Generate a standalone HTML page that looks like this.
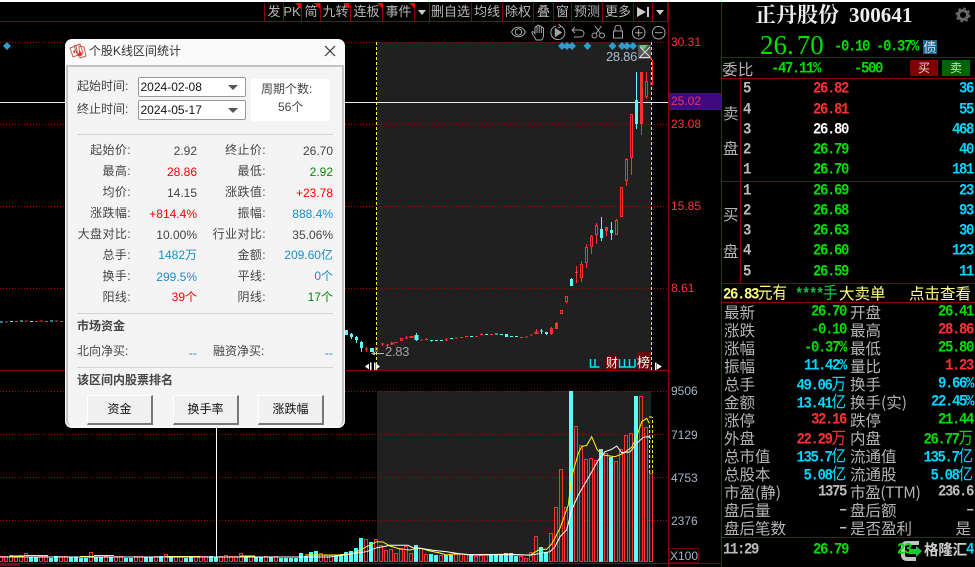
<!DOCTYPE html>
<html><head><meta charset="utf-8"><style>
html,body{margin:0;padding:0;background:#000}
#p{position:relative;width:975px;height:567px;overflow:hidden;background:#000;font-family:"Liberation Sans","Noto Sans CJK SC",sans-serif}
#p div,#p span.a{position:absolute;white-space:nowrap}
svg{position:absolute;left:0;top:0}
.l{height:1px;background:#8b0000}
.tb{top:3px;height:18px;line-height:18px;text-align:center;font:13px/18px "Liberation Sans","Noto Sans CJK SC",sans-serif;color:#b8b8b8;border-right:1px solid #8b0000}
.ax{font-size:12px;line-height:14px;color:#ff3232;left:671px}
.vx{font-size:12px;line-height:14px;color:#a6b4c4;left:671px}
.d{font:12px/16px "Liberation Sans","Noto Sans CJK SC",sans-serif;color:#444}
.dl{text-align:right;width:70px;letter-spacing:.4px}
.dv{text-align:right;width:66px;color:#444}
.r{color:#f00!important}.g{color:#008c00!important}.b{color:#1b8fc4!important}
.cb{left:137.5px;width:106px;height:18px;background:#fff;border:1px solid #999;border-radius:2px;font:12px/19px "Liberation Sans",sans-serif;color:#111;text-indent:2px}
.cb i{position:absolute;right:7px;top:7px;width:0;height:0;border:5px solid transparent;border-top:5px solid #555;border-bottom:0}
.btn{top:395px;width:63px;height:27px;background:#f0f0f0;border-top:1px solid #fff;border-left:1px solid #fff;border-right:2px solid #777;border-bottom:2px solid #777;text-align:center;font:12px/27px "Liberation Sans","Noto Sans CJK SC",sans-serif;color:#111}
.n{font:bold 14px/18px "Liberation Mono",monospace;letter-spacing:-1.4px;transform:scaleY(1.15)}
.c{font:15.5px/18px "Noto Sans CJK SC",sans-serif;color:#b4b4b4}
.w{color:#fff}.R{color:#ff3232}.G{color:#00e000}.C{color:#00d8ff}.S{color:#bdbdbd}.Y{color:#ffff80}
.u{font:14.500px/18px "Noto Sans CJK SC",sans-serif;letter-spacing:0}
</style></head><body><div id="p">
<div style="left:0;top:0;width:975px;height:2px;background:#fff"></div>

<div style="left:377px;top:42px;width:274px;height:328px;background:#202020"></div>
<div style="left:377px;top:391px;width:274px;height:171px;background:#202020"></div>

<svg width="975" height="567" viewBox="0 0 975 567" fill="none">
<g stroke="#a80000" stroke-width="1" stroke-dasharray="1 2">
<path d="M0 42.5H668M0 124.5H668M0 206.5H668M0 288.5H668M0 391.5H668M0 434.5H668M0 477.5H668M0 520.5H668"/>
</g>
<path stroke="#ffff33" stroke-dasharray="3 2" d="M376.5 42V370M651.5 42V370"/>
<path stroke="#fff" d="M216.5 100V562"/>
<path stroke="#e8e8e8" d="M0 102.5H668"/>

<!-- left tail -->
<path stroke="#55ffff" d="M0 322h3M10 321.5h3M20 321h3M30 321.5h3M50 321h3"/>
<path stroke="#ff3232" d="M5 322h3M15 321.5h3M25 321h3M35 321.5h3M40 321h3M45 321.5h3M55 321h3M60 321.5h3"/>

<!-- red candles -->
<path stroke="#ff3232" d="M652.5 60V82M651 82.5h2v2h-2zM646.5 72V81M646.5 96V99M645.5 81.5h2v15h-2zM641.5 72V135M640.5 72.5h2v51h-2zM631.5 157V175M630.5 114.5h2v43h-2zM626.5 158V159M626.5 181V186M625.5 159.5h2v21h-2zM620.5 187.5h2v29h-2zM616.5 219V220M616.5 234V235M615.5 220.5h2v14h-2zM606.5 227V236M605.5 227.5h2v3h-2zM596.5 223V225M596.5 234V244M595.5 225.5h2v9h-2zM591.5 235V236M591.5 246V254M590.5 236.5h2v10h-2zM586.5 244V247M586.5 262V268M585.5 247.5h2v15h-2zM581.5 261V264M581.5 277V282M580.5 264.5h2v13h-2zM576.5 266V283M575 272.5h3M565.5 296.5h2v5h-2zM566.5 301V303M560.5 310.5h2v3h-2zM556.5 322V329M555.5 323.5h2v5h-2zM551.5 327V335M550.5 328.5h2v5h-2z"/>
<path stroke="#ff3232" d="M536.5 329V333M535 332h3v1.5h-3zM530 335h3M525 337h3M520 337.5h3M490 334.5h3M480 334.5h3M481.5 333V335M475 336.5h3M465 336.5h3M460 337.5h3M455 338h3M445 340h3M446.5 338V341M425 339.5h3M426.5 338V340M420 340h3M410 336.5h3v1h-3zM406.5 336V339M405 338h3M400.5 338.5h2v2h-2zM395 342.5h3M391 343h3v1h-3zM391.5 342V345M386 345h3M387.5 344V347M381 344h3M382.5 343V346M375.5 347.5h2v4h-2zM366.5 347V352M365 349h3"/>
<!-- cyan candles -->
<path stroke="#55ffff" d="M636.5 72V100M636.5 124V129M611.5 222V230M611.5 233V240M601.5 217V229M601.5 238V241M571.5 278V280M546.5 334V335M541.5 329V334M540 331h3M515 336.5h3M510 336.5h3M500 334.5h3M495 334h3M485 334.5h3M470 336.5h3M450 338.5h3M440 340.5h3M435 340.5h3M430 340.5h3M431.5 340V341.5M416.5 333V341M356.5 336V343M351.5 333V339M346.5 330V335M361.5 341V352"/>
<path fill="#55ffff" d="M635 100h3v24h-3zM610 230h3v3h-3zM600 229h3v9h-3zM570 279h3v7h-3zM545 332h3v2h-3zM505 334h3v3h-3zM414.5 335h4v5h-4zM370 348h4v4h-4zM360 342h3v6h-3zM355 337h3v3h-3zM350 334h3v3h-3zM345 330h3v5h-3z"/>

<!-- volume cyan -->
<path fill="#55ffff" d="M29 557h4v5h-4zM34 557h4v5h-4zM49 558h4v4h-4zM54 556h4v6h-4zM69 557h4v5h-4zM74 557h4v5h-4zM79 558h4v4h-4zM84 558h4v4h-4zM94 557h4v5h-4zM99 557h4v5h-4zM109 557h4v5h-4zM124 558h4v4h-4zM129 558h4v4h-4zM144 557h4v5h-4zM149 557h4v5h-4zM159 556h4v6h-4zM169 557h4v5h-4zM184 558h4v4h-4zM189 557h4v5h-4zM209 556h4v6h-4zM214 557h4v5h-4zM244 557h4v5h-4zM254 557h4v5h-4zM259 557h4v5h-4zM269 557h4v5h-4zM279 558h4v4h-4zM284 558h4v4h-4zM289 558h4v4h-4zM294 558h4v4h-4zM299 553h4v9h-4zM304 556h4v6h-4zM309 552h4v10h-4zM314 551h4v11h-4zM334 555h4v7h-4zM339 555h4v7h-4zM344 552h4v10h-4zM349 551h4v11h-4zM354 548h4v14h-4zM359 538h4v24h-4zM369 542h4v20h-4zM414 545h4v17h-4zM429 554h4v8h-4zM434 555h4v7h-4zM444 555h4v7h-4zM449 555h4v7h-4zM469 554h4v8h-4zM489 555h4v7h-4zM494 555h4v7h-4zM499 554h4v8h-4zM504 553h4v9h-4zM509 553h4v9h-4zM514 556h4v6h-4zM539 547h4v15h-4zM544 552h4v10h-4zM569 391h4v171h-4zM599 449h4v113h-4zM609 457h4v105h-4zM634 396h4v166h-4z"/>
<!-- volume red -->
<path stroke="#ff3232" d="M-.5 556.5h3V561.5h-3zM4.5 556.5h3V561.5h-3zM9.5 555.5h3V561.5h-3zM14.5 556.5h3V561.5h-3zM19.5 555.5h3V561.5h-3zM24.5 553.5h3V561.5h-3zM39.5 556.5h3V561.5h-3zM44.5 556.5h3V561.5h-3zM59.5 556.5h3V561.5h-3zM64.5 556.5h3V561.5h-3zM89.5 552.5h3V561.5h-3zM104.5 556.5h3V561.5h-3zM114.5 556.5h3V561.5h-3zM119.5 556.5h3V561.5h-3zM134.5 556.5h3V561.5h-3zM139.5 556.5h3V561.5h-3zM154.5 556.5h3V561.5h-3zM164.5 554.5h3V561.5h-3zM174.5 556.5h3V561.5h-3zM179.5 556.5h3V561.5h-3zM194.5 556.5h3V561.5h-3zM199.5 556.5h3V561.5h-3zM204.5 556.5h3V561.5h-3zM219.5 556.5h3V561.5h-3zM224.5 555.5h3V561.5h-3zM229.5 556.5h3V561.5h-3zM234.5 556.5h3V561.5h-3zM239.5 553.5h3V561.5h-3zM249.5 556.5h3V561.5h-3zM264.5 556.5h3V561.5h-3zM274.5 556.5h3V561.5h-3zM319.5 553.5h3V561.5h-3zM324.5 555.5h3V561.5h-3zM329.5 555.5h3V561.5h-3zM364.5 539.5h3V561.5h-3zM374.5 539.5h3V561.5h-3zM379.5 545.5h3V561.5h-3zM384.5 550.5h3V561.5h-3zM389.5 549.5h3V561.5h-3zM394.5 553.5h3V561.5h-3zM399.5 548.5h3V561.5h-3zM404.5 546.5h3V561.5h-3zM409.5 553.5h3V561.5h-3zM419.5 548.5h3V561.5h-3zM424.5 554.5h3V561.5h-3zM439.5 555.5h3V561.5h-3zM454.5 554.5h3V561.5h-3zM459.5 554.5h3V561.5h-3zM464.5 554.5h3V561.5h-3zM474.5 556.5h3V561.5h-3zM479.5 555.5h3V561.5h-3zM484.5 554.5h3V561.5h-3zM519.5 556.5h3V561.5h-3zM524.5 558.5h3V561.5h-3zM529.5 552.5h3V561.5h-3zM534.5 536.5h3V561.5h-3zM549.5 533.5h3V561.5h-3zM554.5 507.5h3V561.5h-3zM559.5 469.5h3V561.5h-3zM564.5 507.5h3V561.5h-3zM574.5 426.5h3V561.5h-3zM579.5 445.5h3V561.5h-3zM584.5 459.5h3V561.5h-3zM589.5 458.5h3V561.5h-3zM594.5 460.5h3V561.5h-3zM604.5 453.5h3V561.5h-3zM614.5 461.5h3V561.5h-3zM619.5 449.5h3V561.5h-3zM624.5 435.5h3V561.5h-3zM629.5 433.5h3V561.5h-3zM639.5 396.5h3V561.5h-3zM644.5 427.5h3V561.5h-3zM649.5 473.5h3V561.5h-3z"/>
<!-- MA lines -->
<path stroke="#ffff00" d="M10 556H24M24 555.5H48M80 556.5H94M94 555.5H114M165 556.5H200M240 556H255M305 555H340M340 554.5H350L355 552.7 366.7 546.7 376.7 541.7 383 542 390 546 400 549 410 550 420 548 430 551 440 553 446.7 555 453 554 463 554 473 555 510 554.7 530 555 540 549.3 546.7 549.3 551.7 544 560 528.3 568.3 505 571.7 476.7 578.3 453.3 581.7 446.7 586.7 445.3 591.7 436.7 597.3 450 603.3 455 615 456.7 623.3 453.3 631.7 447.3 636.7 436.7 641.7 421.7 646.7 418.3 649.3 423.3"/>
<path stroke="#fff" d="M0 557H330L350 554 366.7 551.7 376.7 547.7 383 546.7 390 545.3 408 545.3 413 547.7 423 548.7 433 550.3 446.7 551.7 453 552.7 467 554.7 510 554.3 530 555.3 550 551.7 555 546.7 560 536.7 566.7 530 571.7 510 578.3 495 590 475 598.3 460 605 451.7 611.7 449.3 616.7 446 621.7 452.7 630 452 636.7 443.3 643.3 437.3 648.3 436.7 651 438.5"/>
<path stroke="#ffff00" stroke-dasharray="3 2" d="M649.5 473V423M652.5 473V417M649 417h4"/>

<!-- diamonds -->
<path fill="#2f9bcf" d="M7 42l4 4-4 4-4-4zM562 42l4 4-4 4-4-4zM567 42l4 4-4 4-4-4zM572 42l4 4-4 4-4-4zM587.5 42l4 4-4 4-4-4zM612.5 42l4 4-4 4-4-4zM622 42l4 4-4 4-4-4zM627 42l4 4-4 4-4-4zM633 42l4 4-4 4-4-4z"/>
<path fill="#555" d="M638 45h13v14h-13z"/>
<path fill="#55cc77" d="M639 45h9l-4.500 5z"/>
<path stroke="#ddd" d="M640 47l10 10M650 47l-10 10M639 57.500h11"/>
<path fill="#ff3232" d="M650 57h2v2h-2z"/>

<!-- icons -->
<g stroke="#a4a4a4" stroke-width="1">
<path d="M511.500 32c3-6.500 10.500-6.500 14 0-3.500 6.500-11 6.500-14 0z"/><circle cx="518.500" cy="32" r="3.200"/>
<path d="M535 38c-1-2-3-4-3-5.500 0-1.500 1.800-1 3 1V28c0-1.800 2-1.800 2 0v-1.500c0-1.800 2.200-1.800 2.200 0v.8c0-1.800 2.200-1.800 2.200 0v1.200c0-1.500 2.100-1.500 2.100.2V35c0 2-1 4-2 5h-5.500c-.5-1-.5-1.500-1-2zM537 28v5M539.200 27v6M541.400 28v5"/>
<path d="M561 26.300a7 7 0 1 1-5-.5M558.500 24l2.500 2.300-3 1.700"/><path fill="#a4a4a4" d="M555.300 28.500l6 4-6 4z"/>
<path d="M575 27l-3 3 3 3M572 30h8c3 0 4 2 4 3.500s-1 3.500-4 3.500h-6"/>
<circle cx="594.500" cy="35.500" r="2.500"/><circle cx="602" cy="35.500" r="2.500"/><path d="M596 33.500L601.500 26M600.500 33.500L595 26"/>
<rect x="613.500" y="31" width="9" height="7"/><path d="M615 31v-3c0-3.500 6-3.500 6 0v3"/>
<circle cx="638.700" cy="32.700" r="6.300"/><path d="M635 32.700h7.500M638.700 29v7.500"/>
<circle cx="658.700" cy="32.700" r="6.300"/><path d="M655 32.700h7.500"/>
</g>
<!-- arrows low-marker -->
<path stroke="#bbb" d="M372 353.500h12"/>
<path fill="#bbb" d="M371 353.500l4-2v4z"/>
<path fill="#fff" d="M365 366.500l4-3v6zM370 362.500h1.500v8H370zM374 362.500h1.500v8H374zM376 363.500l4 3-4 3zM655 362.500h1.500v8H655zM657 363.500l5 3-5 3z"/>
<path stroke="#00e4f4" stroke-width="1.500" d="M590.500 359v8h9M595 359v8M619.500 359v8h15.500M624.500 359v8M629.500 359v8M635 359v8"/>
<!-- structural lines -->
<path stroke="#8b0000" d="M0 21.500H668M0 370.500H668M0 563.500H721M668.500 2V567M721.500 2V567M721 57.500H975M721 78.500H975M740.500 78V283M721 181.500H975M721 283.500H975M721 302.500H975M721 537.500H975"/>
<path stroke="#8b0000" stroke-width="2" d="M0 565H20"/>
</svg>

<div class="a" style="left:606px;top:50px;font-size:13px;line-height:14px;color:#a8bccc;letter-spacing:-.3px">28.86</div>
<div class="a" style="left:385px;top:345px;font-size:13px;line-height:14px;color:#a0a0a0;letter-spacing:-.3px">2.83</div>
<div style="left:606px;top:356px;width:12px;height:13px;background:#7d0000;color:#fff;font:12px/13px 'Noto Sans CJK SC',sans-serif">财</div>
<div style="left:637px;top:352px;width:14px;height:17px;background:#660808;color:#fff;font:13px/19px 'Noto Sans CJK SC',sans-serif">榜</div>

<!-- toolbar -->
<div class="tb" style="left:264px;width:18px;border-left:1px solid #8b0000">发</div>
<div class="tb" style="left:283px;width:18px">PK</div>
<div class="tb" style="left:302px;width:18px">简</div>
<div class="tb" style="left:321px;width:29px">九转</div>
<div class="tb" style="left:351px;width:31px">连板</div>
<div class="tb" style="left:383px;width:31px">事件</div>
<div class="tb" style="left:415px;width:14px"><span style="display:block;width:0;height:0;border:4px solid transparent;border-top:5px solid #ccc;border-bottom:0;margin:7px 0 0 3px"></span></div>
<div class="tb" style="left:430px;width:41px">删自选</div>
<div class="tb" style="left:472px;width:30px">均线</div>
<div class="tb" style="left:503px;width:30px">除权</div>
<div class="tb" style="left:534px;width:19px">叠</div>
<div class="tb" style="left:554px;width:17px">窗</div>
<div class="tb" style="left:572px;width:30px">预测</div>
<div class="tb" style="left:603px;width:30px">更多</div>
<div class="tb" style="left:634px;width:18px"><span style="display:block;width:0;height:0;border:5px solid transparent;border-left:9px solid #ccc;border-right:0;margin:4px 0 0 3px"></span><span style="display:block;position:absolute;left:13px;top:4px;width:2px;height:10px;background:#ccc"></span></div>
<div class="tb" style="left:653px;width:14px"><span style="display:block;width:0;height:0;border:4px solid transparent;border-top:5px solid #ccc;border-bottom:0;margin:7px 0 0 3px"></span></div>
<svg width="975" height="30"><path fill="#f00" d="M295 3h6v6zM314 3h6v6zM343 3h6v6zM377 3h6v6zM409 3h6v6z"/></svg>

<!-- axis -->
<div class="ax" style="top:35px">30.31</div>
<div class="ax" style="top:117px">23.08</div>
<div class="ax" style="top:199px">15.85</div>
<div class="ax" style="top:281px">8.61</div>
<div style="left:669px;top:93px;width:52px;height:17px;background:#3f0a80;border-top:1px solid #8b0000;border-bottom:1px solid #8b0000;box-sizing:border-box;color:#f03060;font-size:12px;line-height:15px;text-indent:2px">25.02</div>
<div class="vx" style="top:384px">9506</div>
<div class="vx" style="top:428px">7129</div>
<div class="vx" style="top:471px">4753</div>
<div class="vx" style="top:514px">2376</div>
<div style="left:669px;top:548px;width:28px;height:13px;border:1px solid #6a0000;color:#a6b4c4;font-size:12px;line-height:14px">X100</div>

<!-- dialog -->
<div style="left:65px;top:39px;width:280px;height:389px;background:#fafafa;border-radius:7px;overflow:hidden">
  <div style="left:1px;top:26px;width:274px;height:359px;background:#f4f4f4;border:2px solid #c4c4c4;border-bottom:0;border-radius:0 0 6px 6px"></div>
</div>
<svg width="975" height="567" fill="none"><g transform="translate(69,43)"><path fill="#fff" stroke="#c85a50" d="M1 5l6-2 2 9-5 2zM5 3l6-2 3 9-5 3zM10 3l5 1 2 9-6 2z"/><path fill="#d9352b" d="M11 8l2.500 3-1.500 2h-2.500l-.5-2zM5 7l1.500 1.500-1 2-1.500-1.500z"/></g>
<path stroke="#333" stroke-width="1.200" d="M325 46l10 10M335 46l-10 10"/></svg>
<div class="d" style="left:89px;top:43px;color:#333">个股K线区间统计</div>

<div class="d" style="left:77px;top:78px">起始时间:</div>
<div class="d" style="left:77px;top:101px">终止时间:</div>
<div class="cb" style="top:77px">2024-02-08<i></i></div>
<div class="cb" style="top:100px">2024-05-17<i></i></div>
<div style="left:251px;top:79px;width:79px;height:42px;background:#fff;border-radius:2px"></div>
<div class="d" style="left:261px;top:81px">周期个数:</div>
<div class="d" style="left:278px;top:99px">56个</div>
<div style="left:77px;top:134px;width:256px;height:1px;background:#d4d4d4"></div>

<div class="d dl" style="left:61px;top:142px">起始价:</div><div class="d dv" style="left:131px;top:143px">2.92</div>
<div class="d dl" style="left:196px;top:142px">终止价:</div><div class="d dv" style="left:267px;top:143px">26.70</div>
<div class="d dl" style="left:61px;top:163px">最高:</div><div class="d dv r" style="left:131px;top:164px">28.86</div>
<div class="d dl" style="left:196px;top:163px">最低:</div><div class="d dv g" style="left:267px;top:164px">2.92</div>
<div class="d dl" style="left:61px;top:184px">均价:</div><div class="d dv" style="left:131px;top:185px">14.15</div>
<div class="d dl" style="left:196px;top:184px">涨跌值:</div><div class="d dv r" style="left:267px;top:185px">+23.78</div>
<div class="d dl" style="left:61px;top:205px">涨跌幅:</div><div class="d dv r" style="left:131px;top:206px">+814.4%</div>
<div class="d dl" style="left:196px;top:205px">振幅:</div><div class="d dv b" style="left:267px;top:206px">888.4%</div>
<div class="d dl" style="left:61px;top:226px">大盘对比:</div><div class="d dv" style="left:131px;top:227px">10.00%</div>
<div class="d dl" style="left:196px;top:226px">行业对比:</div><div class="d dv" style="left:267px;top:227px">35.06%</div>
<div class="d dl" style="left:61px;top:247px">总手:</div><div class="d dv b" style="left:131px;top:247px">1482万</div>
<div class="d dl" style="left:196px;top:247px">金额:</div><div class="d dv b" style="left:267px;top:247px">209.60亿</div>
<div class="d dl" style="left:61px;top:268px">换手:</div><div class="d dv b" style="left:131px;top:269px">299.5%</div>
<div class="d dl" style="left:196px;top:268px">平线:</div><div class="d dv b" style="left:267px;top:268px">0个</div>
<div class="d dl" style="left:61px;top:289px">阳线:</div><div class="d dv r" style="left:131px;top:289px">39个</div>
<div class="d dl" style="left:196px;top:289px">阴线:</div><div class="d dv g" style="left:267px;top:289px">17个</div>
<div style="left:77px;top:313px;width:256px;height:1px;background:#d4d4d4"></div>
<div class="d" style="left:77px;top:318px;font-weight:bold">市场资金</div>
<div class="d" style="left:77px;top:343px">北向净买:</div>
<div class="d" style="left:213px;top:343px">融资净买:</div>
<div class="d dv b" style="left:131px;top:345px">--</div>
<div class="d dv b" style="left:267px;top:345px">--</div>
<div style="left:77px;top:367px;width:256px;height:1px;background:#d4d4d4"></div>
<div class="d" style="left:77px;top:372px;font-weight:bold">该区间内股票排名</div>
<div class="btn" style="left:87px">资金</div>
<div class="btn" style="left:173px">换手率</div>
<div class="btn" style="left:258px">涨跌幅</div>

<!-- right panel -->
<div style="left:755px;top:2px;color:#eee;font:bold 21px/26px 'Liberation Serif','Noto Serif CJK SC',serif">正丹股份</div>
<div style="left:849px;top:2px;color:#eee;font:bold 21px/26px 'Liberation Serif',serif;letter-spacing:.1px">300641</div>
<svg width="975" height="60" fill="none"><circle cx="963" cy="15" r="4.500" stroke="#666" stroke-width="3"/><circle cx="963" cy="15" r="6.500" stroke="#666" stroke-width="2" stroke-dasharray="2.500 2.600"/></svg>
<div style="left:760px;top:30px;color:#00e000;font:27px/30px 'Liberation Serif',serif;letter-spacing:0">26.<span style="margin-left:3px">70</span></div>
<div class="n G" style="left:834px;top:38px">-0.10</div>
<div class="n G" style="left:876px;top:38px">-0.37%</div>
<div style="left:923px;top:40px;width:14px;height:14px;background:#1c6496;color:#ddd;font:13px/14px 'Noto Sans CJK SC',sans-serif;text-align:center">债</div>

<div class="c" style="left:722px;top:60px;letter-spacing:.4px">委比</div>
<div class="n G" style="left:771px;top:60px">-47.11%</div>
<div class="n G" style="left:854px;top:60px">-500</div>
<div style="left:910px;top:60px;width:28px;height:16px;background:#800000;color:#ddd;font:12px/16px 'Noto Sans CJK SC',sans-serif;text-align:center">买</div>
<div style="left:942px;top:60px;width:28px;height:16px;background:#006400;color:#ddd;font:12px/16px 'Noto Sans CJK SC',sans-serif;text-align:center">卖</div>

<div class="c" style="left:723px;top:104px">卖</div><div class="c" style="left:723px;top:139px">盘</div>
<div class="c" style="left:723px;top:205px">买</div><div class="c" style="left:723px;top:242px">盘</div>

<div class="n S" style="left:743px;top:80px">5</div><div class="n R" style="left:813px;top:80px">26.82</div><div class="n C" style="right:2px;top:80px">36</div>
<div class="n S" style="left:743px;top:101px">4</div><div class="n R" style="left:813px;top:101px">26.81</div><div class="n C" style="right:2px;top:101px">55</div>
<div class="n S" style="left:743px;top:121px">3</div><div class="n w" style="left:813px;top:121px">26.80</div><div class="n C" style="right:2px;top:121px">468</div>
<div class="n S" style="left:743px;top:141px">2</div><div class="n G" style="left:813px;top:141px">26.79</div><div class="n C" style="right:2px;top:141px">40</div>
<div class="n S" style="left:743px;top:161px">1</div><div class="n G" style="left:813px;top:161px">26.70</div><div class="n C" style="right:2px;top:161px">181</div>
<div class="n S" style="left:743px;top:182px">1</div><div class="n G" style="left:813px;top:182px">26.69</div><div class="n C" style="right:2px;top:182px">23</div>
<div class="n S" style="left:743px;top:202px">2</div><div class="n G" style="left:813px;top:202px">26.68</div><div class="n C" style="right:2px;top:202px">93</div>
<div class="n S" style="left:743px;top:222px">3</div><div class="n G" style="left:813px;top:222px">26.63</div><div class="n C" style="right:2px;top:222px">30</div>
<div class="n S" style="left:743px;top:242px">4</div><div class="n G" style="left:813px;top:242px">26.60</div><div class="n C" style="right:2px;top:242px">123</div>
<div class="n S" style="left:743px;top:263px">5</div><div class="n G" style="left:813px;top:263px">26.59</div><div class="n C" style="right:2px;top:263px">11</div>

<div class="n Y" style="left:723px;top:284px">26.83<span class="u">元有</span></div>
<div class="n" style="left:795px;top:284px;color:#00c850">****<span class="u">手</span></div>
<div class="c" style="left:839px;top:284px;color:#ffff80">大卖单</div>
<div class="c" style="left:909px;top:284px;color:#ffff80">点击查看</div>

<div class="c" style="left:724px;top:303px">最新</div><div class="n G" style="right:129px;top:303px">26.70</div><div class="c" style="left:850px;top:303px">开盘</div><div class="n G" style="right:2px;top:303px">26.41</div>
<div class="c" style="left:724px;top:321px">涨跌</div><div class="n G" style="right:129px;top:321px">-0.10</div><div class="c" style="left:850px;top:321px">最高</div><div class="n R" style="right:2px;top:321px">28.86</div>
<div class="c" style="left:724px;top:339px">涨幅</div><div class="n G" style="right:129px;top:339px">-0.37%</div><div class="c" style="left:850px;top:339px">最低</div><div class="n G" style="right:2px;top:339px">25.80</div>
<div class="c" style="left:724px;top:357px">振幅</div><div class="n C" style="right:129px;top:357px">11.42%</div><div class="c" style="left:850px;top:357px">量比</div><div class="n R" style="right:2px;top:357px">1.23</div>
<div class="c" style="left:724px;top:375px">总手</div><div class="n C" style="right:129px;top:375px">49.06<span class="u">万</span></div><div class="c" style="left:850px;top:375px">换手</div><div class="n C" style="right:2px;top:375px">9.66%</div>
<div class="c" style="left:724px;top:393px">金额</div><div class="n C" style="right:129px;top:393px">13.41<span class="u">亿</span></div><div class="c" style="left:850px;top:393px">换手(实)</div><div class="n C" style="right:2px;top:393px">22.45%</div>
<div class="c" style="left:724px;top:411px">涨停</div><div class="n R" style="right:129px;top:411px">32.16</div><div class="c" style="left:850px;top:411px">跌停</div><div class="n G" style="right:2px;top:411px">21.44</div>
<div class="c" style="left:724px;top:429px">外盘</div><div class="n R" style="right:129px;top:429px">22.29<span class="u">万</span></div><div class="c" style="left:850px;top:429px">内盘</div><div class="n G" style="right:2px;top:429px">26.77<span class="u">万</span></div>
<div class="c" style="left:724px;top:447px">总市值</div><div class="n C" style="right:129px;top:447px">135.7<span class="u">亿</span></div><div class="c" style="left:850px;top:447px">流通值</div><div class="n C" style="right:2px;top:447px">135.7<span class="u">亿</span></div>
<div class="c" style="left:724px;top:465px">总股本</div><div class="n C" style="right:129px;top:465px">5.08<span class="u">亿</span></div><div class="c" style="left:850px;top:465px">流通股</div><div class="n C" style="right:2px;top:465px">5.08<span class="u">亿</span></div>
<div class="c" style="left:724px;top:483px">市盈(静)</div><div class="n S" style="right:129px;top:483px">1375</div><div class="c" style="left:850px;top:483px;letter-spacing:-.3px">市盈(TTM)</div><div class="n S" style="right:2px;top:483px">236.6</div>
<div class="c" style="left:724px;top:501px">盘后量</div><div class="n S" style="right:129px;top:501px">–</div><div class="c" style="left:850px;top:501px">盘后额</div><div class="n S" style="right:2px;top:501px">–</div>
<div class="c" style="left:724px;top:519px">盘后笔数</div><div class="n S" style="right:129px;top:519px">–</div><div class="c" style="left:850px;top:519px">是否盈利</div><div class="c" style="right:4px;top:519px">是</div>

<div class="n S" style="left:723px;top:541px">11:29</div>
<div class="n G" style="left:813px;top:541px">26.79</div>
<div class="n C" style="right:2px;top:541px">4</div>
<svg width="975" height="567" fill="none"><path stroke="#c4c4c4" stroke-width="4" d="M919 543h-12c-2.500 0-4 1.500-4 4v8c0 2.500 1.500 4 4 4h9"/><path fill="#18c838" d="M909 549h7v-3l6 5-6 6v-3h-7z"/></svg>
<div class="n G" style="left:897px;top:541px">23</div>
<div style="left:924px;top:540px;color:#cfcfcf;font:bold 14.500px/20px 'Noto Sans CJK SC',sans-serif;letter-spacing:-.2px">格隆汇</div>
</div></body></html>
